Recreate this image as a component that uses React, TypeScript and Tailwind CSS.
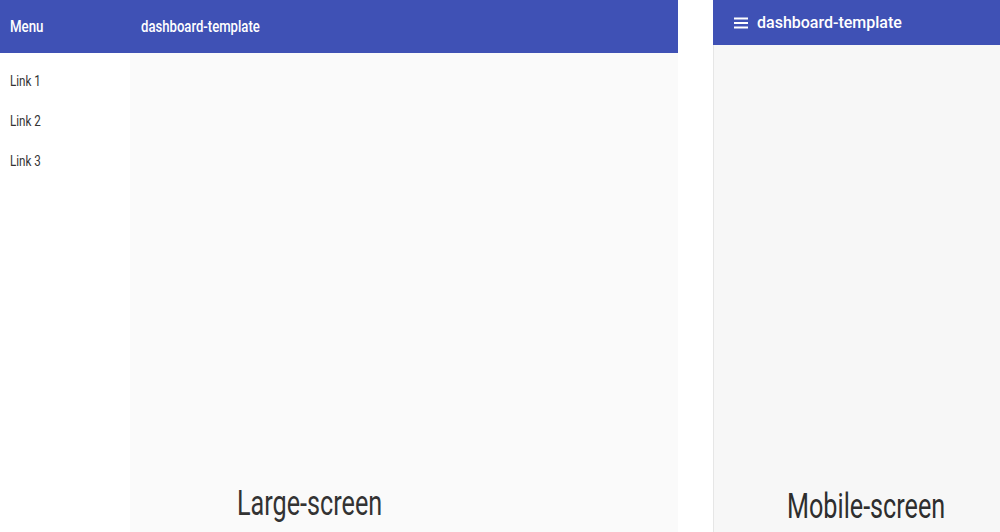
import React from "react";

const font = { fontFamily: "Roboto, 'Noto Sans', sans-serif" };

function LargeScreen() {
  return (
    <div className="w-[678px] h-full flex flex-col">
      <div className="h-[53px] bg-[#3f51b5] flex items-center text-white font-medium text-[16px]">
        <div className="w-[130px] pl-[10px]">
          <span className="inline-block scale-x-[0.83] origin-left">Menu</span>
        </div>
        <div className="pl-[11px]">
          <span className="inline-block scale-x-[0.82] origin-left">dashboard-template</span>
        </div>
      </div>
      <div className="flex-1 flex flex-row">
        <div className="w-[130px] bg-white flex flex-col pt-[16px] pl-[10px] text-[14px] text-[#333]">
          <div className="h-[40px] leading-[24px]">
            <span className="inline-block scale-x-[0.83] origin-left">Link 1</span>
          </div>
          <div className="h-[40px] leading-[24px]">
            <span className="inline-block scale-x-[0.83] origin-left">Link 2</span>
          </div>
          <div className="h-[40px] leading-[24px]">
            <span className="inline-block scale-x-[0.83] origin-left">Link 3</span>
          </div>
        </div>
        <div className="flex-1 bg-[#fafafa] flex flex-col justify-end items-start pb-[6px] pl-[107px]">
          <span className="inline-block whitespace-nowrap scale-x-[0.72] origin-left text-[35px] leading-[44px] text-[#333]">
            Large-screen
          </span>
        </div>
      </div>
    </div>
  );
}

function MobileScreen() {
  return (
    <div className="w-[287px] h-full flex flex-col">
      <div className="h-[45px] bg-[#3f51b5] flex items-center gap-[9px] pl-[21px] text-white font-medium text-[16px]">
        <svg width="14" height="12" viewBox="0 0 14 12" fill="#fff">
          <rect x="0" y="0.5" width="14" height="2" />
          <rect x="0" y="5" width="14" height="2" />
          <rect x="0" y="9.5" width="14" height="2" />
        </svg>
        <span>dashboard-template</span>
      </div>
      <div className="flex-1 bg-[#f7f7f7] border-l border-[#e6e6e6] flex flex-col justify-end items-start pb-[3px] pl-[73px]">
        <span className="inline-block whitespace-nowrap scale-x-[0.72] origin-left text-[35px] leading-[44px] text-[#2e2e2e]">
          Mobile-screen
        </span>
      </div>
    </div>
  );
}

export default function App() {
  return (
    <div className="w-[1000px] h-[532px] bg-white flex flex-row gap-[35px] overflow-hidden" style={font}>
      <LargeScreen />
      <MobileScreen />
    </div>
  );
}
